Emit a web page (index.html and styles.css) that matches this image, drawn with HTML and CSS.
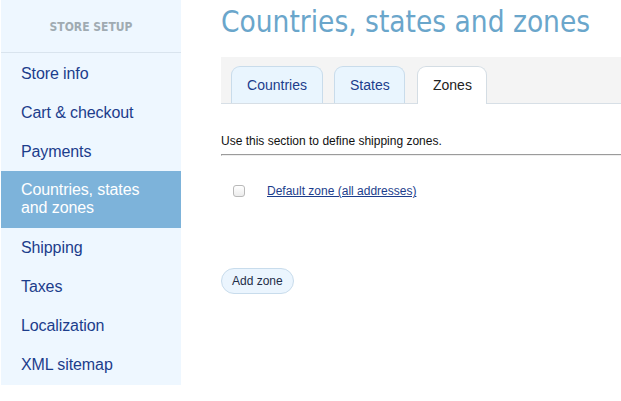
FILE: index.html
```html
<!DOCTYPE html>
<html>
<head>
<meta charset="utf-8">
<link rel="stylesheet" href="styles.css">
</head>
<body>
<div class="page">
  <aside class="sidebar">
    <div class="side-head">STORE SETUP</div>
    <ul class="side-menu">
      <li class="side-item">Store info</li>
      <li class="side-item">Cart &amp; checkout</li>
      <li class="side-item">Payments</li>
      <li class="side-item active">Countries, states and zones</li>
      <li class="side-item">Shipping</li>
      <li class="side-item">Taxes</li>
      <li class="side-item">Localization</li>
      <li class="side-item">XML sitemap</li>
    </ul>
  </aside>
  <main class="main">
    <h1 class="title">Countries, states and zones</h1>
    <div class="tabbar">
      <div class="tab first">Countries</div>
      <div class="tab">States</div>
      <div class="tab current">Zones</div>
    </div>
    <p class="intro">Use this section to define shipping zones.</p>
    <div class="rule"></div>
    <div class="zone-row">
      <span class="check"></span>
      <a class="zone-link" href="#">Default zone (all addresses)</a>
    </div>
    <button class="add-btn">Add zone</button>
  </main>
</div>
</body>
</html>
```
FILE: styles.css
```css
html, body {
  margin: 0;
  padding: 0;
  background: #fff;
  font-family: "Liberation Sans", Arial, sans-serif;
}
.page {
  display: flex;
  align-items: flex-start;
  width: 621px;
  height: 401px;
  overflow: hidden;
}
.sidebar {
  width: 180px;
  flex: none;
  margin-left: 1px;
  background: #eef7ff;
  padding-bottom: 1px;
}
.side-head {
  height: 52px;
  line-height: 54px;
  text-align: center;
  font-family: "DejaVu Sans Condensed", "DejaVu Sans", sans-serif;
  font-weight: bold;
  font-size: 12px;
  color: #a0abb2;
  border-bottom: 1px solid #d9e4ee;
}
.side-menu {
  list-style: none;
  margin: 0;
  padding: 1px 0 0;
}
.side-item {
  padding: 10px 20px;
  font-size: 16px;
  line-height: 19px;
  color: #1c3d8c;
  letter-spacing: -0.1px;
}
.side-item.active {
  background: #7db3da;
  color: #fff;
  padding: 10px 20px 11px;
  line-height: 18px;
}
.main {
  flex: 1;
  padding-left: 40px;
  min-width: 0;
}
.title {
  margin: 0;
  height: 57px;
  line-height: 44px;
  font-family: "DejaVu Sans Condensed", "DejaVu Sans", sans-serif;
  font-weight: normal;
  font-size: 29.5px;
  color: #6aa6cb;
  white-space: nowrap;
}
.tabbar {
  display: flex;
  gap: 11px;
  align-items: flex-end;
  background: #f4f4f4;
  padding: 9px 0 0 10px;
  height: 37px;
  border-bottom: 1px solid #d7dfe6;
}
.tab {
  flex: none;
  height: 36px;
  line-height: 36px;
  padding: 0 15px;
  font-size: 14px;
  color: #1c3d8c;
  background: #e9f5fe;
  border: 1px solid #c9dceb;
  border-bottom: none;
  border-radius: 9px 9px 0 0;
}
.tab.first {
  width: 60px;
  text-align: center;
}
.tab:nth-child(2) {
  width: 39px;
  text-align: center;
}
.tab.current {
  width: 38px;
  text-align: center;
  background: #fff;
  color: #222;
  border-color: #d4dde4;
  height: 37px;
  margin-bottom: -1px;
  margin-left: 1px;
}
.intro {
  margin: 30px 0 0;
  font-size: 12px;
  line-height: 14px;
  color: #111;
}
.rule {
  margin-top: 6px;
  height: 0;
  border-top: 1px solid #9b9b9b;
  border-bottom: 1px solid #eee;
  border-left: 1px solid #9b9b9b;
}
.zone-row {
  display: flex;
  align-items: center;
  margin-top: 28px;
  padding-left: 12px;
  height: 14px;
}
.check {
  width: 10px;
  height: 10px;
  border: 1px solid #b9b9b9;
  border-radius: 3px;
  background: linear-gradient(#fff, #ececec);
  margin-right: 22px;
}
.zone-link {
  font-size: 12px;
  color: #1c3d8c;
  text-decoration: underline;
}
.add-btn {
  display: block;
  margin-top: 70px;
  height: 26px;
  padding: 0 10px;
  font-family: "Liberation Sans", Arial, sans-serif;
  font-size: 12px;
  color: #1f2d48;
  background: #ebf5fe;
  border: 1px solid #c8dcec;
  border-radius: 13px;
}
```
